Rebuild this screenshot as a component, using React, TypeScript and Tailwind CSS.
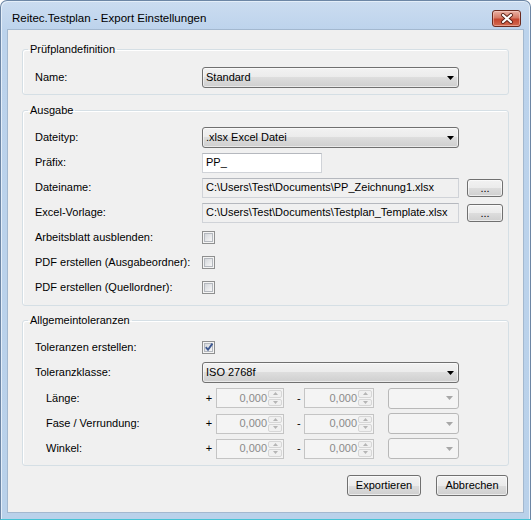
import React from "react";

const BTN_BG =
  "bg-[linear-gradient(to_bottom,#f2f2f2_0%,#ebebeb_50%,#dddddd_50%,#cfcfcf_100%)]";

function Combo({ value, w = "w-[257px]" }: { value: string; w?: string }) {
  return (
    <div
      className={`${w} h-[21px] rounded-[3px] border border-[#707070] ${BTN_BG} shadow-[inset_0_0_0_1px_rgba(255,255,255,0.55)] flex items-center justify-between pl-[3px] pr-[4px]`}
    >
      <span className="text-[11px] leading-[13px] text-black">{value}</span>
      <svg width="7" height="4" viewBox="0 0 7 4">
        <path d="M0 0H7L3.5 4Z" fill="#000" />
      </svg>
    </div>
  );
}

function DisabledCombo() {
  return (
    <div className="w-[71px] h-[21px] rounded-[3px] border border-[#b8b8b8] bg-[#f4f4f4] flex items-center justify-end pr-[5px]">
      <svg width="7" height="4" viewBox="0 0 7 4">
        <path d="M0 0H7L3.5 4Z" fill="#a7a7a7" />
      </svg>
    </div>
  );
}

function TextBox({
  value,
  w,
  readOnly,
}: {
  value: string;
  w: string;
  readOnly?: boolean;
}) {
  return (
    <div
      className={`${w} h-[20px] border border-[#d0d3d8] border-t-[#b5b8be] ${
        readOnly ? "bg-[#f0f0f0]" : "bg-white"
      } flex items-center pl-[3px] overflow-hidden whitespace-nowrap`}
    >
      <span className="text-[11px] leading-[13px] text-black">{value}</span>
    </div>
  );
}

function DotsButton() {
  return (
    <button
      className={`w-[36px] h-[18px] ml-[8px] rounded-[3px] border border-[#707070] ${BTN_BG} shadow-[inset_0_0_0_1px_rgba(255,255,255,0.6)] flex items-end justify-center pb-[2px]`}
    >
      <span className="text-[11px] leading-[11px] text-black">...</span>
    </button>
  );
}

function Check({ checked }: { checked?: boolean }) {
  return (
    <div className="w-[13px] h-[13px] border border-[#8e8f8f] bg-[#f4f4f4] p-[1px]">
      <div className="w-full h-full border border-[#b4b8be] bg-[linear-gradient(135deg,#d4d7db_0%,#f7f7f7_100%)] relative">
        {checked && (
          <svg
            className="absolute left-[-1px] top-[-2px]"
            width="10"
            height="10"
            viewBox="0 0 10 10"
          >
            <path
              d="M1.8 5.2L4 7.8L8.4 1.6"
              fill="none"
              stroke="#3f5a92"
              strokeWidth="1.9"
            />
          </svg>
        )}
      </div>
    </div>
  );
}

function Spin({ w }: { w: string }) {
  return (
    <div
      className={`${w} h-[20px] border border-[#c4c4c4] bg-[#f4f4f4] flex items-stretch`}
    >
      <div className="flex-1 flex items-center justify-end pr-[1px]">
        <span className="text-[11px] leading-[13px] text-[#8a8a8a]">0,000</span>
      </div>
      <div className="w-[15px] flex flex-col gap-[1px] p-[1px] pl-0">
        <div className="flex-1 rounded-[2px] border border-[#d6d6d6] bg-[#f0f0f0] flex items-center justify-center">
          <svg width="5" height="3" viewBox="0 0 5 3">
            <path d="M0 3H5L2.5 0Z" fill="#b5b5b5" />
          </svg>
        </div>
        <div className="flex-1 rounded-[2px] border border-[#d6d6d6] bg-[#f0f0f0] flex items-center justify-center">
          <svg width="5" height="3" viewBox="0 0 5 3">
            <path d="M0 0H5L2.5 3Z" fill="#b5b5b5" />
          </svg>
        </div>
      </div>
    </div>
  );
}

function Row({
  label,
  children,
  h = "h-[25px]",
  indent,
}: {
  label: string;
  children: React.ReactNode;
  h?: string;
  indent?: boolean;
}) {
  return (
    <div className={`flex items-center ${h}`}>
      <div
        className={`w-[167px] shrink-0 text-[11px] leading-[13px] text-black whitespace-nowrap ${
          indent ? "pl-[11px]" : ""
        }`}
      >
        {label}
      </div>
      {children}
    </div>
  );
}

function TolRow({ label, h }: { label: string; h: string }) {
  return (
    <Row label={label} h={h} indent>
      <span className="w-[14px] text-center text-[11px] leading-[13px]">+</span>
      <Spin w="w-[68px]" />
      <span className="w-[20px] pl-[13px] text-[11px] leading-[13px]">-</span>
      <Spin w="w-[70px]" />
      <div className="w-[14px]" />
      <DisabledCombo />
    </Row>
  );
}

function Group({
  title,
  children,
  className = "",
  pt,
  pb,
}: {
  title: string;
  children: React.ReactNode;
  className?: string;
  pt: string;
  pb: string;
}) {
  return (
    <fieldset
      className={`border border-[#d5dfe5] rounded-[3px] shadow-[inset_1px_1px_0_#ffffff] ${className}`}
    >
      <legend className="ml-[5px] px-[2px] text-[11px] leading-[13px] text-black">
        {title}
      </legend>
      <div className={`pl-[12px] ${pt} ${pb}`}>{children}</div>
    </fieldset>
  );
}

export default function App() {
  return (
    <div
      className={`w-[531px] h-[520px] font-['Liberation_Sans',Arial,sans-serif] text-black`}
    >
      <div className="w-full h-full rounded-t-[7px] border border-[#6d86a5] border-b-[#45c3d4] bg-[linear-gradient(to_bottom,#cbdcf0_0px,#bcd3ec_30px,#b9d1ea_100%)] shadow-[inset_1px_1px_0_#e4eef9,inset_-1px_0_0_#e4eef9] flex flex-col">
        <div className="h-[28px] flex justify-between pl-[11px] pr-[9px] shrink-0">
          <span className="mt-[10px] text-[11.5px] leading-[14px] text-black whitespace-nowrap">
            Reitec.Testplan - Export Einstellungen
          </span>
          <div className="mt-[9px] w-[29px] h-[17px] rounded-[3px] border border-[#6b2a1f] bg-[linear-gradient(to_bottom,#eab2a5_0%,#d67a66_45%,#c5462f_55%,#d36a50_100%)] shadow-[inset_0_0_0_1px_rgba(255,220,210,0.45)] flex items-center justify-center">
            <svg width="14" height="11" viewBox="0 0 14 11">
              <path
                d="M3 2L11 9M11 2L3 9"
                stroke="#5c2218"
                strokeWidth="4"
                strokeLinecap="round"
              />
              <path
                d="M3 2L11 9M11 2L3 9"
                stroke="#ffffff"
                strokeWidth="2.2"
                strokeLinecap="round"
              />
            </svg>
          </div>
        </div>

        <div className="mx-[6px] h-[484px] shrink-0 border border-[#a3b8cf] bg-[#f0f0f0] px-[14px] pt-[13px] flex flex-col">
          <Group title="Prüfplandefinition" pt="pt-[9px]" pb="pb-[4px]">
            <Row label="Name:">
              <Combo value="Standard" />
            </Row>
          </Group>

          <Group title="Ausgabe" className="mt-[9px]" pt="pt-[8px]" pb="pb-[5px]">
            <Row label="Dateityp:">
              <Combo value=".xlsx Excel Datei" />
            </Row>
            <Row label="Präfix:">
              <TextBox value="PP_" w="w-[120px]" />
            </Row>
            <Row label="Dateiname:">
              <TextBox
                value="C:\Users\Test\Documents\PP_Zeichnung1.xlsx"
                w="w-[257px]"
                readOnly
              />
              <DotsButton />
            </Row>
            <Row label="Excel-Vorlage:">
              <TextBox
                value="C:\Users\Test\Documents\Testplan_Template.xlsx"
                w="w-[257px]"
                readOnly
              />
              <DotsButton />
            </Row>
            <Row label="Arbeitsblatt ausblenden:">
              <Check />
            </Row>
            <Row label="PDF erstellen (Ausgabeordner):">
              <Check />
            </Row>
            <Row label="PDF erstellen (Quellordner):">
              <Check />
            </Row>
          </Group>

          <Group
            title="Allgemeintoleranzen"
            className="mt-[8px]"
            pt="pt-[7px]"
            pb="pb-[4px]"
          >
            <Row label="Toleranzen erstellen:" h="h-[26px]">
              <Check checked />
            </Row>
            <Row label="Toleranzklasse:" h="h-[25px]">
              <Combo value="ISO 2768f" />
            </Row>
            <TolRow label="Länge:" h="h-[26px]" />
            <TolRow label="Fase / Verrundung:" h="h-[25px]" />
            <TolRow label="Winkel:" h="h-[25px]" />
          </Group>

          <div className="mt-[9px] flex justify-end gap-[15px] pr-[1px]">
            <button
              className={`w-[74px] h-[21px] rounded-[3px] border border-[#707070] ${BTN_BG} shadow-[inset_0_0_0_1px_rgba(255,255,255,0.6)] text-[11px] leading-[13px] text-black`}
            >
              Exportieren
            </button>
            <button
              className={`w-[72px] h-[21px] rounded-[3px] border border-[#707070] ${BTN_BG} shadow-[inset_0_0_0_1px_rgba(255,255,255,0.6)] text-[11px] leading-[13px] text-black`}
            >
              Abbrechen
            </button>
          </div>
        </div>
      </div>
    </div>
  );
}
